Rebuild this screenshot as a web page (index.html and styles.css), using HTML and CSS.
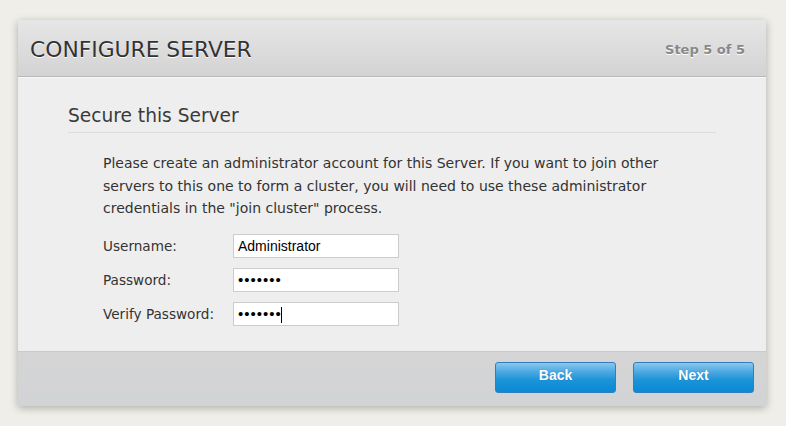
FILE: index.html
```html
<!DOCTYPE html>
<html>
<head>
<meta charset="utf-8">
<link rel="stylesheet" href="styles.css">
</head>
<body>
<div class="dialog">
  <div class="dialog-head">
    <h1>CONFIGURE SERVER</h1>
    <span class="step">Step 5 of 5</span>
  </div>
  <div class="dialog-body">
    <h2>Secure this Server</h2>
    <div class="content">
      <p>Please create an administrator account for this Server. If you want to join other servers to this one to form a cluster, you will need to use these administrator credentials in the "join cluster" process.</p>
      <div class="form">
        <label>Username:</label>
        <div class="field">Administrator</div>
        <label>Password:</label>
        <div class="field dots">&bull;&bull;&bull;&bull;&bull;&bull;&bull;</div>
        <label>Verify Password:</label>
        <div class="field dots">&bull;&bull;&bull;&bull;&bull;&bull;&bull;<span class="caret"></span></div>
      </div>
    </div>
  </div>
  <div class="dialog-foot">
    <button class="btn">Back</button>
    <button class="btn">Next</button>
  </div>
</div>
</body>
</html>
```

FILE: styles.css
```css
html, body {
  margin: 0;
  padding: 0;
}
body {
  background: #f0eee8;
  width: 786px;
  height: 426px;
  overflow: hidden;
  font-family: "DejaVu Sans", Verdana, sans-serif;
  color: #3a3a3a;
  padding: 20px 0 0 18px;
  box-sizing: border-box;
}
.dialog {
  width: 748px;
  height: 386px;
  display: flex;
  flex-direction: column;
  background: #eeeeee;
  box-shadow: 0 2px 8px rgba(0,0,0,0.28);
}
.dialog-head {
  height: 57px;
  box-sizing: border-box;
  background: linear-gradient(#e6e6e6, #d3d3d3);
  border-bottom: 1px solid #b9b9b9;
  box-shadow: 0 1px 0 #f8f8f8;
  display: flex;
  align-items: center;
  justify-content: space-between;
  padding: 2px 21px 0 12px;
}
.dialog-head h1 {
  margin: 0;
  font-weight: normal;
  font-size: 21.8px;
  color: #333;
  text-shadow: 0 1px 0 #fff;
}
.step {
  font-size: 13px;
  font-weight: bold;
  color: #888;
  text-shadow: 0 1px 0 #fff;
}
.dialog-body {
  flex: 1;
  padding: 28px 50px 0 50px;
}
.dialog-body h2 {
  margin: 0;
  font-weight: normal;
  font-size: 18.6px;
  color: #3a3a3a;
  padding-bottom: 6px;
  border-bottom: 1px solid #d9dcdc;
}
.content {
  padding: 19px 0 0 35px;
}
.content p {
  margin: 0;
  font-size: 14px;
  line-height: 22.5px;
  width: 575px;
  color: #333;
}
.form {
  display: grid;
  grid-template-columns: 130px 166px;
  row-gap: 10px;
  margin-top: 14px;
  align-items: center;
}
.form label {
  font-size: 13.6px;
  color: #333;
}
.field {
  height: 24px;
  box-sizing: border-box;
  background: #fff;
  border: 1px solid #c9cdd0;
  font-family: "Liberation Sans", Arial, sans-serif;
  font-size: 14px;
  color: #000;
  padding: 3px 0 0 4px;
  line-height: 16px;
}
.field.dots {
  font-size: 15px;
  letter-spacing: 1px;
  padding-top: 3px;
}
.caret {
  display: inline-block;
  width: 1px;
  height: 16px;
  margin-left: -1px;
  background: #000;
  vertical-align: -4px;
}
.dialog-foot {
  height: 55px;
  box-sizing: border-box;
  border-top: 1px solid #cbcbcb;
  background: linear-gradient(#d5d5d5, #d2d3d5);
  display: flex;
  justify-content: flex-end;
  align-items: flex-start;
  gap: 17px;
  padding: 10px 12px 0 0;
}
.btn {
  width: 121px;
  height: 31px;
  border: 1px solid #2d7fc0;
  border-radius: 3px;
  background: linear-gradient(#8cc8ee 0%, #4ca9e2 30%, #1a93d8 60%, #0a89d4 100%);
  color: #fff;
  font-family: "Liberation Sans", Arial, sans-serif;
  font-weight: bold;
  font-size: 14px;
  padding: 0 0 5px 0;
  text-shadow: 0 0 1px rgba(0,60,110,0.4);
}
```
